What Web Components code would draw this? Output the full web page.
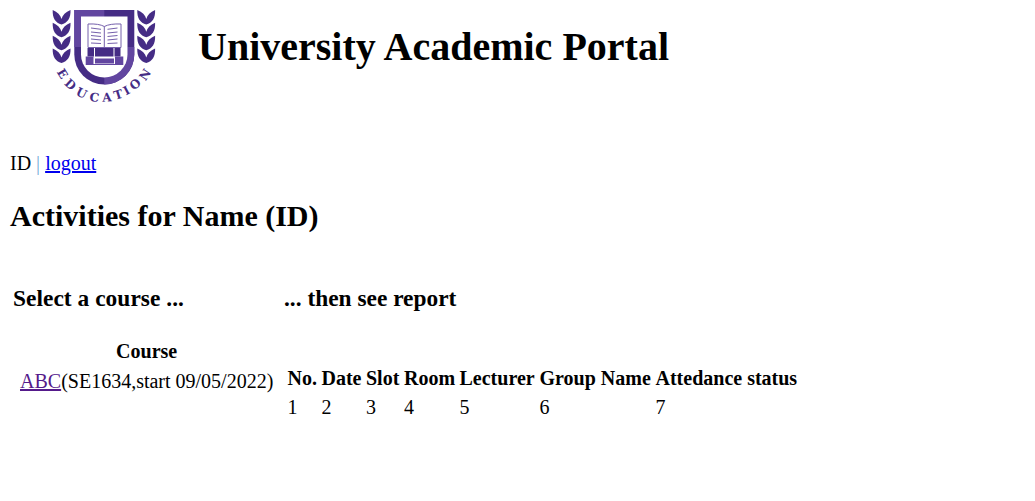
<!DOCTYPE html>
<html lang="en">
<head>
<meta charset="utf-8">
<title>University Academic Portal</title>
<style>
  body { margin: 0; background: #fff; color: #000; font: 20px/23px "Liberation Serif", "Times New Roman", serif; }
</style>
</head>
<body>
<portal-page></portal-page>
<script>
class PortalLogo extends HTMLElement {
  connectedCallback() {
    const leaf = (y) => `<path d="M17.500 ${y + 14.500}C11.500 ${y + 13} 8.300 ${y + 8} 8.700 ${y}C13.500 ${y + 2} 16.500 ${y + 5} 17.500 ${y + 9}C18.500 ${y + 5} 21.500 ${y + 2} 26.500 ${y}C26.900 ${y + 8} 23.500 ${y + 13} 17.500 ${y + 14.500}Z"/>`;
    const branch = [6, 18.8, 31.8, 44.500].map(leaf).join('');
    // Each letter stands on the circle that runs below the shield.
    const letters = [['E', 18.500, 69.500, 58], ['D', 26.500, 80.500, 43], ['U', 37.500, 89, 26], ['C', 50.300, 93.300, 9], ['A', 62.800, 93.300, -3], ['T', 74.200, 90.500, -17], ['I', 82.500, 86.300, -28], ['O', 91, 80, -41], ['N', 101, 70.500, -56]];
    this.attachShadow({ mode: 'open' }).innerHTML = `
      <style>
        :host { display: block; width: 120px; height: 104px; }
        svg { display: block; }
        text { font: bold 12px "DejaVu Serif", serif; text-anchor: middle; fill: #452c85; }
      </style>
      <svg width="120" height="104" viewBox="0 0 120 104" role="img" aria-label="Education">
        <g fill="#452c85">${branch}<g transform="translate(119.800 0) scale(-1 1)">${branch}</g></g>
        <path fill="#452c85" d="M30.300 6H90.300V50.500A30 30 0 0 1 30.300 50.500Z"/>
        <path fill="#6246a0" d="M30.300 6H60.300V13H37V43H30.300ZM83.300 43H90.300V50.500A30 30 0 0 1 60.300 80.500V73A23.150 23 0 0 0 83.300 50.500Z"/>
        <path fill="#fff" d="M37 12.500H83.500V50.500A23.250 23 0 0 1 37 50.500Z"/>
        <path fill="#fff" stroke="#7560ab" d="M44 20Q55 19.500 60.300 22.500Q66 19.500 77 20V43.500H44Z"/>
        <path stroke="#7560ab" fill="none" d="M60.300 22.500V43.500M47 24l10 1.300M47 28l10 1M47 31.500l10 1M47 35l10 1M47 39l10 .5M63.500 25.300l10-1.300M63.500 29l10-1M63.500 32.500l10-1M63.500 36l10-1M63.500 39.500l10-.5"/>
        <path fill="#452c85" d="M43.500 44H50V52.500H43.500ZM51 44H69.500V52.500H51ZM70.500 44H76.500V52.500H70.500Z"/>
        <path fill="#6246a0" d="M41.700 52.500H49.500V61H41.700ZM71 52.500H79.300V61H71ZM51 54.500H70V59.500H51ZM49.500 60H71V61H49.500Z"/>
        ${letters.map(([c, x, y, r]) => `<text y="4.300" transform="translate(${x} ${y}) rotate(${r})">${c}</text>`).join('')}
      </svg>`;
  }
}
customElements.define('portal-logo', PortalLogo);

class PortalHeader extends HTMLElement {
  connectedCallback() {
    this.attachShadow({ mode: 'open' }).innerHTML = `
      <style>
        :host { display: flex; height: 148px; padding: 4px 0 0 44px; box-sizing: border-box; }
        h1 { margin: 20px 0 0 34px; font-size: 40px; line-height: 46px; white-space: nowrap; }
      </style>
      <portal-logo></portal-logo><h1><slot></slot></h1>`;
  }
}
customElements.define('portal-header', PortalHeader);

class UserBar extends HTMLElement {
  connectedCallback() {
    this.attachShadow({ mode: 'open' }).innerHTML = `
      <style>
        :host { display: block; padding: 0 10px; height: 23px; margin-top: 4px; }
        a { color: #0000ee; }
        span { color: #78add8; }
      </style>
      <slot></slot> <span>|</span> <a href="#">logout</a>`;
  }
}
customElements.define('user-bar', UserBar);

class CourseList extends HTMLElement {
  connectedCallback() {
    this.attachShadow({ mode: 'open' }).innerHTML = `
      <style>
        :host { display: block; width: 271px; }
        h3 { margin: 0 0 28px 13px; font-size: 23.400px; line-height: 27px; letter-spacing: .04px; }
        .list { display: grid; row-gap: 7px; margin-left: 20px; width: 253px; white-space: nowrap; }
        .head { text-align: center; font-weight: bold; }
        a { color: #551a8b; }
      </style>
      <h3>Select a course ...</h3>
      <div class="list"><div class="head">Course</div><div><a href="#">ABC</a>(SE1634,start 09/05/2022)</div></div>`;
  }
}
customElements.define('course-list', CourseList);

class ActivityReport extends HTMLElement {
  connectedCallback() {
    const heads = ['No.', 'Date', 'Slot', 'Room', 'Lecturer', 'Group Name', 'Attedance status'];
    this.attachShadow({ mode: 'open' }).innerHTML = `
      <style>
        :host { display: block; }
        h3 { margin: 0 0 55px 13px; font-size: 23.400px; line-height: 27px; }
        .grid { display: grid; grid-template-columns: 34px 44.500px 38px 55.500px 80px 116px auto; row-gap: 6px; margin-left: 16.500px; white-space: nowrap; }
        b { display: block; }
      </style>
      <h3>... then see report</h3>
      <div class="grid">${heads.map((h) => `<b>${h}</b>`).join('')}${heads.map((h, i) => `<span>${i + 1}</span>`).join('')}</div>`;
  }
}
customElements.define('activity-report', ActivityReport);

class PortalPage extends HTMLElement {
  connectedCallback() {
    this.attachShadow({ mode: 'open' }).innerHTML = `
      <style>
        :host { display: flow-root; height: 501px; overflow: hidden; }
        h2 { margin: 24px 10px 52px; font-size: 30px; line-height: 34px; }
        main { display: flex; }
      </style>
      <portal-header>University Academic Portal</portal-header>
      <user-bar>ID</user-bar>
      <h2>Activities for Name (ID)</h2>
      <main><course-list></course-list><activity-report></activity-report></main>`;
  }
}
customElements.define('portal-page', PortalPage);
</script>
</body>
</html>
